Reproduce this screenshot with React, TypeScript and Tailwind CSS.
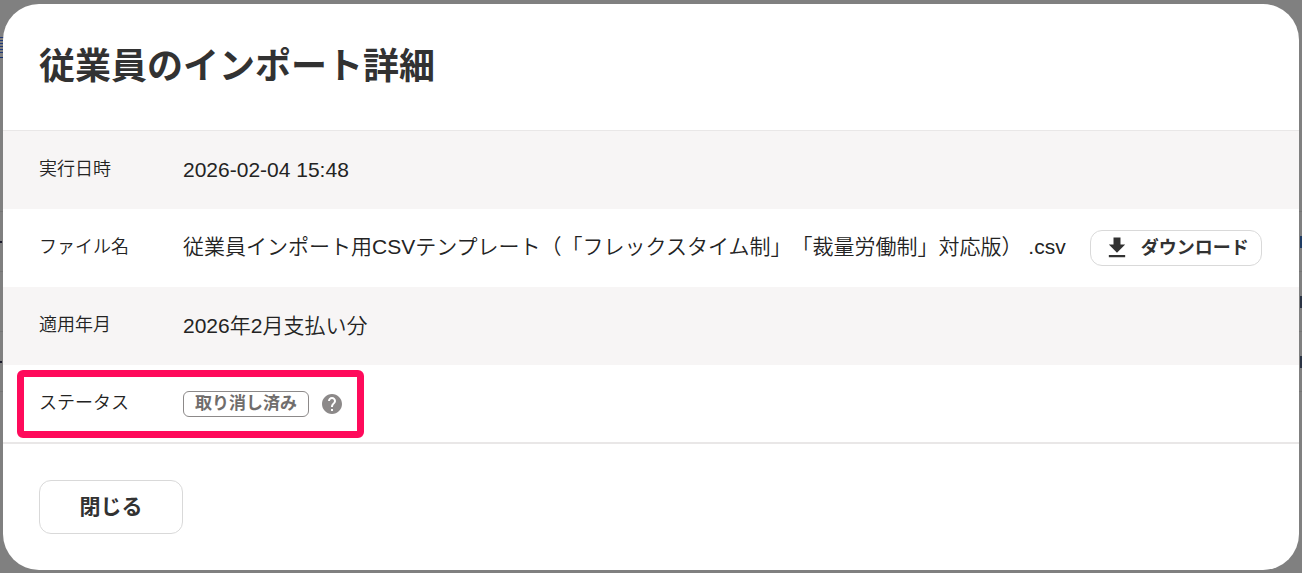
import type { ReactNode } from 'react'
import { MdFileDownload, MdHelp } from 'react-icons/md'

type DetailRow = {
  label: string
  content: ReactNode
  highlighted?: boolean
}

const outlineButton =
  'border border-[#d9d9d9] bg-white font-bold text-[#323232] hover:bg-gray-50'

const rows: DetailRow[] = [
  { label: '実行日時', content: '2026-02-04 15:48' },
  {
    label: 'ファイル名',
    content: (
      <>
        <span className="pb-0.5 [text-spacing-trim:space-all]">
          従業員インポート用CSVテンプレート（「フレックスタイム制」「裁量労働制」対応版） .csv
        </span>
        <button
          type="button"
          className={`ml-6 flex h-9 shrink-0 items-center gap-2.5 rounded-xl px-3 text-lg leading-6 ${outlineButton}`}
        >
          <MdFileDownload className="size-7" aria-hidden="true" />
          ダウンロード
        </button>
      </>
    ),
  },
  { label: '適用年月', content: '2026年2月支払い分' },
  {
    label: 'ステータス',
    content: (
      <>
        <span className="flex h-[26px] items-center rounded-md border border-[#8c8989] px-[11px] text-[17px] font-bold text-[#706d6c]">
          取り消し済み
        </span>
        <button type="button" aria-label="ヘルプ" className="ml-[11px]">
          <MdHelp className="size-6 text-[#8c8989]" aria-hidden="true" />
        </button>
      </>
    ),
    highlighted: true,
  },
]

// Edges of the list page that stay visible around the dialog
const pageRows = [
  { left: '', right: '' },
  { left: 'bg-[#1c1c2c]', right: 'bg-[#1f3c63]' },
  { left: '', right: 'bg-[#2b3444]' },
  { left: 'bg-[#1c1c2c]', right: 'bg-[#2b3444]' },
]

function PageBehind() {
  return (
    <div aria-hidden="true" className="absolute inset-0 overflow-hidden bg-[#808080]">
      <div className="h-[152px] pt-[37px]">
        <div className="h-[18px] w-1 bg-[repeating-linear-gradient(#223a78_0_1px,#808080_1px_3px)]" />
        <div className="mt-0.5 h-px w-1 bg-[#14306f]" />
      </div>
      {pageRows.map((row, i) => (
        <div
          key={i}
          className="flex h-[60px] items-center justify-between border-b border-[#757575]"
        >
          <span className={`h-0.5 w-0.5 ${row.left}`} />
          <span className={`h-3 w-0.5 ${row.right}`} />
        </div>
      ))}
    </div>
  )
}

function DetailRows() {
  return (
    <dl className="border-t border-b-2 border-t-[#e9e7e7] border-b-[#e9e7e7] [font-weight:350]">
      {rows.map((row) => (
        <div
          key={row.label}
          className="relative flex h-[78px] items-center px-9 last:h-[77px] odd:bg-[#f7f5f5]"
        >
          <dt className="w-36 shrink-0 pb-0.5 text-lg leading-7">{row.label}</dt>
          <dd className="flex min-w-0 items-center text-[21px] whitespace-nowrap">
            {row.content}
          </dd>
          {row.highlighted && (
            <span className="pointer-events-none absolute top-[5px] left-3.5 h-[68px] w-[347px] rounded-md border-[7px] border-[#ff0a5b]" />
          )}
        </div>
      ))}
    </dl>
  )
}

export default function App() {
  return (
    <div className="relative min-h-screen bg-[#808080] px-[3px] pt-1 pb-[3px] font-['Liberation_Sans','Noto_Sans_CJK_JP',sans-serif] text-[#232323]">
      <PageBehind />
      <section
        role="dialog"
        aria-labelledby="dialog-title"
        className="relative overflow-hidden rounded-[36px] bg-white"
      >
        <header className="p-9">
          <h1
            id="dialog-title"
            className="text-4xl leading-[54px] font-bold text-[#323232]"
          >
            従業員のインポート詳細
          </h1>
        </header>
        <DetailRows />
        <footer className="p-9">
          <button
            type="button"
            className={`h-[54px] w-36 rounded-xl text-[21px] ${outlineButton}`}
          >
            閉じる
          </button>
        </footer>
      </section>
    </div>
  )
}
